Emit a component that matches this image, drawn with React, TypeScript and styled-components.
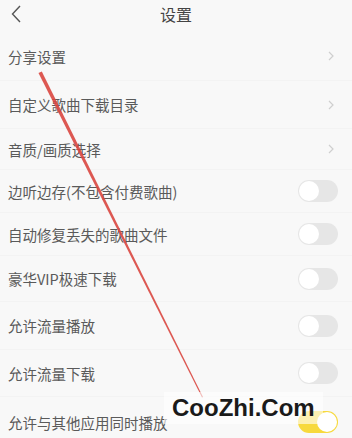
import React from 'react';
import styled, { createGlobalStyle } from 'styled-components';

const Global = createGlobalStyle`
  html, body { margin: 0; padding: 0; background: #f8f8f8; }
  body { font-family: "Noto Sans CJK SC", "Noto Sans", sans-serif; }
`;

const Page = styled.div`
  position: relative;
  width: 352px;
  height: 438px;
  overflow: hidden;
  background: #f8f8f8;
`;

const Header = styled.div`
  height: 32px;
  display: flex;
  align-items: center;
  justify-content: center;
  position: relative;
`;

const Back = styled.div`
  position: absolute;
  left: 8px;
  top: 4px;
  width: 16px;
  height: 20px;
  display: flex;
  align-items: center;
  justify-content: center;
`;

const Title = styled.div`
  font-size: 16px;
  color: #444;
  margin-top: -5px;
`;

const Row = styled.div<{ $h: number; $line?: boolean }>`
  height: ${(p) => p.$h}px;
  box-sizing: border-box;
  display: flex;
  align-items: center;
  justify-content: space-between;
  padding: 0 14px 0 8px;
  border-bottom: ${(p) => (p.$line ? '1px solid #f3f3f3' : 'none')};
`;

const Label = styled.div`
  font-size: 14.5px;
  color: #5a5a5a;
`;

const Chevron = styled.div`
  width: 10px;
  display: flex;
  justify-content: center;
  margin-right: 2px;
`;

const Track = styled.div<{ $on?: boolean }>`
  width: 40px;
  height: 22px;
  border-radius: 11px;
  background: ${(p) => (p.$on ? '#f7d93c' : '#e6e6e6')};
  display: flex;
  align-items: center;
  justify-content: ${(p) => (p.$on ? 'flex-end' : 'flex-start')};
  padding: 1px;
  box-sizing: border-box;
`;

const Knob = styled.div`
  width: 20px;
  height: 20px;
  border-radius: 50%;
  background: #fff;
`;

const Arrow = styled.svg`
  position: absolute;
  left: 0;
  top: 0;
  pointer-events: none;
`;

const Watermark = styled.div`
  position: absolute;
  left: 164px;
  top: 392px;
  padding: 0 8px;
  height: 32px;
  display: flex;
  align-items: center;
  background: rgba(255, 255, 255, 0.6);
  font-family: "Liberation Sans", Arial, sans-serif;
  font-weight: bold;
  font-size: 24px;
  color: #1a1a1a;
`;

type Item = { label: string; h: number; kind: 'link' | 'toggle'; on?: boolean };

const items: Item[] = [
  { label: '分享设置', h: 49, kind: 'link' },
  { label: '自定义歌曲下载目录', h: 48, kind: 'link' },
  { label: '音质/画质选择', h: 41, kind: 'link' },
  { label: '边听边存(不包含付费歌曲)', h: 43, kind: 'toggle' },
  { label: '自动修复丢失的歌曲文件', h: 43, kind: 'toggle' },
  { label: '豪华VIP极速下载', h: 46, kind: 'toggle' },
  { label: '允许流量播放', h: 48, kind: 'toggle' },
  { label: '允许流量下载', h: 47, kind: 'toggle' },
  { label: '允许与其他应用同时播放', h: 50, kind: 'toggle', on: true },
];

const ChevronRight = () => (
  <svg width="6" height="10" viewBox="0 0 6 10">
    <path d="M1 1 L5 5 L1 9" fill="none" stroke="#cfcfcf" strokeWidth="1.2" />
  </svg>
);

export default function App() {
  return (
    <Page>
      <Global />
      <Header>
        <Back>
          <svg width="10" height="18" viewBox="0 0 10 18">
            <path d="M9 1 L1.5 9 L9 17" fill="none" stroke="#555" strokeWidth="1.4" />
          </svg>
        </Back>
        <Title>设置</Title>
      </Header>
      {items.map((it, i) => (
        <Row key={it.label} $h={it.h} $line={i < items.length - 1}>
          <Label>{it.label}</Label>
          {it.kind === 'link' ? (
            <Chevron>
              <ChevronRight />
            </Chevron>
          ) : (
            <Track $on={it.on}>
              <Knob />
            </Track>
          )}
        </Row>
      ))}
      <Arrow width="352" height="438" viewBox="0 0 352 438">
        <polygon points="38.5,73 41.8,71.5 203,397 202,397.5" fill="#d9463f" opacity="0.9" />
      </Arrow>
      <Watermark>CooZhi.Com</Watermark>
    </Page>
  );
}
